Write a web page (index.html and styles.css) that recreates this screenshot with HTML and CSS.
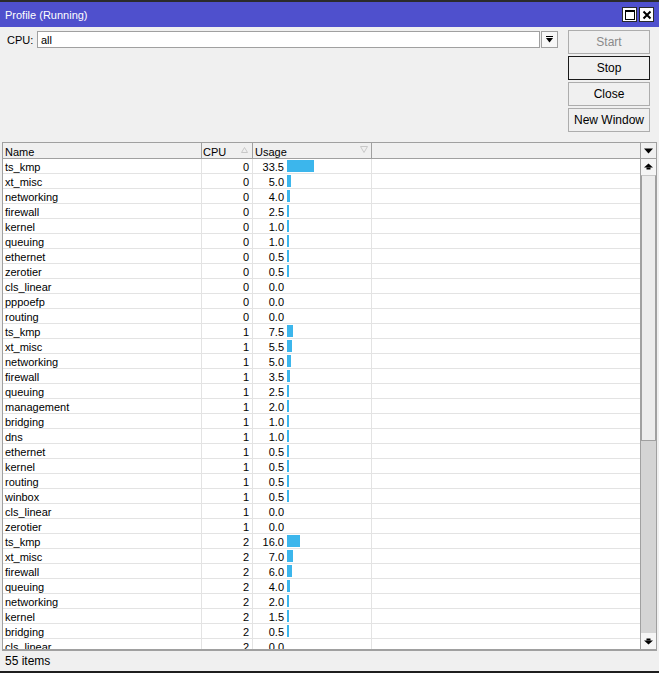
FILE: index.html
```html
<!DOCTYPE html>
<html>
<head>
<meta charset="utf-8">
<link rel="stylesheet" href="styles.css">
</head>
<body>
<div class="window">
  <div class="titlebar">
    <span class="title">Profile (Running)</span>
    <div class="tbtns">
      <span class="tbtn"><svg width="12" height="12" viewBox="0 0 12 12"><rect x="1.5" y="1.5" width="9" height="9" fill="none" stroke="#000" stroke-width="1"/><rect x="1" y="1" width="10" height="2" fill="#000"/></svg></span>
      <span class="tbtn"><svg width="12" height="12" viewBox="0 0 12 12"><path d="M2.5 2.5 L9.5 9.5 M9.5 2.5 L2.5 9.5" stroke="#000" stroke-width="2"/></svg></span>
    </div>
  </div>
  <div class="top">
    <div class="form">
      <div class="cpurow">
        <span class="label">CPU:</span>
        <div class="input">all</div>
        <div class="ddbtn"><svg width="9" height="9" viewBox="0 0 9 9"><rect x="1" y="1" width="7" height="1" fill="#000"/><path d="M1 3 H8 L4.5 7.5 Z" fill="#000"/></svg></div>
      </div>
    </div>
    <div class="buttons">
      <div class="btn disabled">Start</div>
      <div class="btn default">Stop</div>
      <div class="btn">Close</div>
      <div class="btn">New Window</div>
    </div>
  </div>
  <div class="list">
    <div class="grid">
      <div class="row head">
        <div class="c name">Name</div>
        <div class="c cpu hcpu">CPU<svg class="sort" width="7" height="6" viewBox="0 0 7 6"><path d="M3.5 0.5 L6.5 5.5 H0.5 Z" fill="none" stroke="#c8c8c8"/></svg></div>
        <div class="c usage husage">Usage<svg class="filt" width="8" height="7" viewBox="0 0 8 7"><path d="M0.5 0.5 H7.5 L4 6.5 Z" fill="none" stroke="#c8c8c8"/></svg></div>
        <div class="c rest"></div>
      </div>
      <div class="body">
        <div class="row"><div class="c name">ts_kmp</div><div class="c cpu">0</div><div class="c usage"><span class="val">33.5</span><span class="bar" style="width:27px"></span></div><div class="c rest"></div></div>
        <div class="row"><div class="c name">xt_misc</div><div class="c cpu">0</div><div class="c usage"><span class="val">5.0</span><span class="bar" style="width:4px"></span></div><div class="c rest"></div></div>
        <div class="row"><div class="c name">networking</div><div class="c cpu">0</div><div class="c usage"><span class="val">4.0</span><span class="bar" style="width:3px"></span></div><div class="c rest"></div></div>
        <div class="row"><div class="c name">firewall</div><div class="c cpu">0</div><div class="c usage"><span class="val">2.5</span><span class="bar" style="width:2px"></span></div><div class="c rest"></div></div>
        <div class="row"><div class="c name">kernel</div><div class="c cpu">0</div><div class="c usage"><span class="val">1.0</span><span class="bar" style="width:2px"></span></div><div class="c rest"></div></div>
        <div class="row"><div class="c name">queuing</div><div class="c cpu">0</div><div class="c usage"><span class="val">1.0</span><span class="bar" style="width:2px"></span></div><div class="c rest"></div></div>
        <div class="row"><div class="c name">ethernet</div><div class="c cpu">0</div><div class="c usage"><span class="val">0.5</span><span class="bar" style="width:2px"></span></div><div class="c rest"></div></div>
        <div class="row"><div class="c name">zerotier</div><div class="c cpu">0</div><div class="c usage"><span class="val">0.5</span><span class="bar" style="width:2px"></span></div><div class="c rest"></div></div>
        <div class="row"><div class="c name">cls_linear</div><div class="c cpu">0</div><div class="c usage"><span class="val">0.0</span></div><div class="c rest"></div></div>
        <div class="row"><div class="c name">pppoefp</div><div class="c cpu">0</div><div class="c usage"><span class="val">0.0</span></div><div class="c rest"></div></div>
        <div class="row"><div class="c name">routing</div><div class="c cpu">0</div><div class="c usage"><span class="val">0.0</span></div><div class="c rest"></div></div>
        <div class="row"><div class="c name">ts_kmp</div><div class="c cpu">1</div><div class="c usage"><span class="val">7.5</span><span class="bar" style="width:6px"></span></div><div class="c rest"></div></div>
        <div class="row"><div class="c name">xt_misc</div><div class="c cpu">1</div><div class="c usage"><span class="val">5.5</span><span class="bar" style="width:5px"></span></div><div class="c rest"></div></div>
        <div class="row"><div class="c name">networking</div><div class="c cpu">1</div><div class="c usage"><span class="val">5.0</span><span class="bar" style="width:4px"></span></div><div class="c rest"></div></div>
        <div class="row"><div class="c name">firewall</div><div class="c cpu">1</div><div class="c usage"><span class="val">3.5</span><span class="bar" style="width:3px"></span></div><div class="c rest"></div></div>
        <div class="row"><div class="c name">queuing</div><div class="c cpu">1</div><div class="c usage"><span class="val">2.5</span><span class="bar" style="width:2px"></span></div><div class="c rest"></div></div>
        <div class="row"><div class="c name">management</div><div class="c cpu">1</div><div class="c usage"><span class="val">2.0</span><span class="bar" style="width:2px"></span></div><div class="c rest"></div></div>
        <div class="row"><div class="c name">bridging</div><div class="c cpu">1</div><div class="c usage"><span class="val">1.0</span><span class="bar" style="width:2px"></span></div><div class="c rest"></div></div>
        <div class="row"><div class="c name">dns</div><div class="c cpu">1</div><div class="c usage"><span class="val">1.0</span><span class="bar" style="width:2px"></span></div><div class="c rest"></div></div>
        <div class="row"><div class="c name">ethernet</div><div class="c cpu">1</div><div class="c usage"><span class="val">0.5</span><span class="bar" style="width:2px"></span></div><div class="c rest"></div></div>
        <div class="row"><div class="c name">kernel</div><div class="c cpu">1</div><div class="c usage"><span class="val">0.5</span><span class="bar" style="width:2px"></span></div><div class="c rest"></div></div>
        <div class="row"><div class="c name">routing</div><div class="c cpu">1</div><div class="c usage"><span class="val">0.5</span><span class="bar" style="width:2px"></span></div><div class="c rest"></div></div>
        <div class="row"><div class="c name">winbox</div><div class="c cpu">1</div><div class="c usage"><span class="val">0.5</span><span class="bar" style="width:2px"></span></div><div class="c rest"></div></div>
        <div class="row"><div class="c name">cls_linear</div><div class="c cpu">1</div><div class="c usage"><span class="val">0.0</span></div><div class="c rest"></div></div>
        <div class="row"><div class="c name">zerotier</div><div class="c cpu">1</div><div class="c usage"><span class="val">0.0</span></div><div class="c rest"></div></div>
        <div class="row"><div class="c name">ts_kmp</div><div class="c cpu">2</div><div class="c usage"><span class="val">16.0</span><span class="bar" style="width:13px"></span></div><div class="c rest"></div></div>
        <div class="row"><div class="c name">xt_misc</div><div class="c cpu">2</div><div class="c usage"><span class="val">7.0</span><span class="bar" style="width:6px"></span></div><div class="c rest"></div></div>
        <div class="row"><div class="c name">firewall</div><div class="c cpu">2</div><div class="c usage"><span class="val">6.0</span><span class="bar" style="width:5px"></span></div><div class="c rest"></div></div>
        <div class="row"><div class="c name">queuing</div><div class="c cpu">2</div><div class="c usage"><span class="val">4.0</span><span class="bar" style="width:3px"></span></div><div class="c rest"></div></div>
        <div class="row"><div class="c name">networking</div><div class="c cpu">2</div><div class="c usage"><span class="val">2.0</span><span class="bar" style="width:2px"></span></div><div class="c rest"></div></div>
        <div class="row"><div class="c name">kernel</div><div class="c cpu">2</div><div class="c usage"><span class="val">1.5</span><span class="bar" style="width:2px"></span></div><div class="c rest"></div></div>
        <div class="row"><div class="c name">bridging</div><div class="c cpu">2</div><div class="c usage"><span class="val">0.5</span><span class="bar" style="width:2px"></span></div><div class="c rest"></div></div>
        <div class="row"><div class="c name">cls_linear</div><div class="c cpu">2</div><div class="c usage"><span class="val">0.0</span></div><div class="c rest"></div></div>
      </div>
    </div>
    <div class="vscroll">
      <div class="sbhead"><svg width="9" height="6" viewBox="0 0 9 6"><path d="M0 0.5 H9 L4.5 5.5 Z" fill="#000"/></svg></div>
      <div class="sbbtn"><svg width="9" height="8" viewBox="0 0 9 8"><path d="M4.5 0.5 L9 4.5 H0 Z" fill="#000"/><rect x="2.5" y="4.5" width="4" height="2" fill="#000"/></svg></div>
      <div class="track"><div class="thumb"></div></div>
      <div class="sbbtn"><svg width="9" height="8" viewBox="0 0 9 8"><rect x="2.5" y="1.5" width="4" height="2" fill="#000"/><path d="M0 3.5 H9 L4.5 7.5 Z" fill="#000"/></svg></div>
    </div>
  </div>
  <div class="status">55 items</div>
</div>
</body>
</html>
```
FILE: styles.css
```css
* { box-sizing: border-box; }
html, body { margin: 0; padding: 0; }
body {
  background: #f0f0f0;
  font-family: "Liberation Sans", Arial, sans-serif;
  font-size: 11px;
  color: #000;
}
.window {
  width: 659px;
  height: 673px;
  display: flex;
  flex-direction: column;
  border-top: 2px solid #2b2b2b;
  border-bottom: 2px solid #1e1e1e;
  background: #f0f0f0;
  overflow: hidden;
}
.titlebar {
  height: 25px;
  flex: none;
  background: #4f50cd;
  display: flex;
  align-items: center;
  justify-content: space-between;
  padding: 0 5px 0 5px;
}
.title {
  color: #fff;
  font-size: 11px;
  padding-top: 1px;
}
.tbtns { display: flex; gap: 2px; }
.tbtn {
  width: 15px;
  height: 15px;
  background: #fff;
  border: 1px solid #2a2a2a;
  display: flex;
  align-items: center;
  justify-content: center;
}
.tbtn svg { display: block; }
.top {
  height: 115px;
  flex: none;
  display: flex;
  justify-content: space-between;
  padding: 3px 9px 0 7px;
}
.form { flex: 1; }
.cpurow {
  display: flex;
  align-items: center;
  margin-top: 1px;
  height: 17px;
}
.label { width: 30px; }
.input {
  width: 503px;
  height: 17px;
  background: #fff;
  border: 1px solid #a0a0a0;
  padding: 1px 0 0 3px;
  line-height: 14px;
}
.ddbtn {
  width: 17px;
  height: 17px;
  margin-left: 1px;
  background: #f7f7f7;
  border: 1px solid #a0a0a0;
  display: flex;
  align-items: center;
  justify-content: center;
}
.ddbtn svg { display: block; }
.buttons {
  width: 82px;
  display: flex;
  flex-direction: column;
  gap: 2px;
}
.btn {
  height: 24px;
  border: 1px solid #adadad;
  background: #f0f0f0;
  display: flex;
  align-items: center;
  justify-content: center;
  font-size: 12px;
}
.btn.disabled { color: #8a8a8a; }
.btn.default { border-color: #1a1a1a; }
.list {
  flex: 1;
  margin: 0 2px 0 2px;
  border: 1px solid #a0a0a0;
  border-bottom-width: 2px;
  display: flex;
  overflow: hidden;
  min-height: 0;
}
.grid {
  flex: 1;
  display: flex;
  flex-direction: column;
  overflow: hidden;
  background: #fff;
}
.row {
  display: grid;
  grid-template-columns: 199px 51px 119px 1fr;
  height: 15px;
  flex: none;
  border-bottom: 1px solid #e3e3e3;
  line-height: 14px;
}
.row.head {
  height: 16px;
  background: #f0f0f0;
  border-bottom: 1px solid #a0a0a0;
}
.body { background: #fff; overflow: hidden; flex: 1; }
.c {
  border-right: 1px solid #e3e3e3;
  white-space: nowrap;
  overflow: hidden;
  position: relative;
  padding-top: 1px;
}
.head .c { border-right-color: #a0a0a0; padding-top: 2px; }
.name { padding-left: 2px; }
.cpu { text-align: right; padding-right: 3px; }
.head .cpu { text-align: left; padding-left: 1px; }
.usage { display: flex; align-items: center; }
.head .usage { padding-left: 2px; }
.val { width: 31px; text-align: right; }
.bar {
  height: 12px;
  margin-left: 3px;
  margin-top: -1px;
  background: #3cb6ec;
}
.rest { border-right: none; }
.sort { position: absolute; right: 4px; top: 4px; }
.filt { position: absolute; right: 3px; top: 3px; }
.vscroll {
  width: 16px;
  flex: none;
  display: flex;
  flex-direction: column;
  border-left: 1px solid #a0a0a0;
  background: #d4d4d4;
}
.sbhead {
  height: 16px;
  flex: none;
  background: #f0f0f0;
  border-bottom: 1px solid #a0a0a0;
  display: flex;
  align-items: center;
  justify-content: center;
}
.sbbtn {
  height: 16px;
  flex: none;
  background: #f5f5f5;
  display: flex;
  align-items: center;
  justify-content: center;
}
.sbbtn svg, .sbhead svg { display: block; }
.track { flex: 1; background: #d4d4d4; }
.thumb {
  height: 266px;
  background: #ececec;
  border: 1px solid #a0a0a0;
  border-top-color: #c8c8c8;
}
.status {
  height: 20px;
  flex: none;
  padding-left: 5px;
  display: flex;
  align-items: center;
  font-size: 12px;
}
```
